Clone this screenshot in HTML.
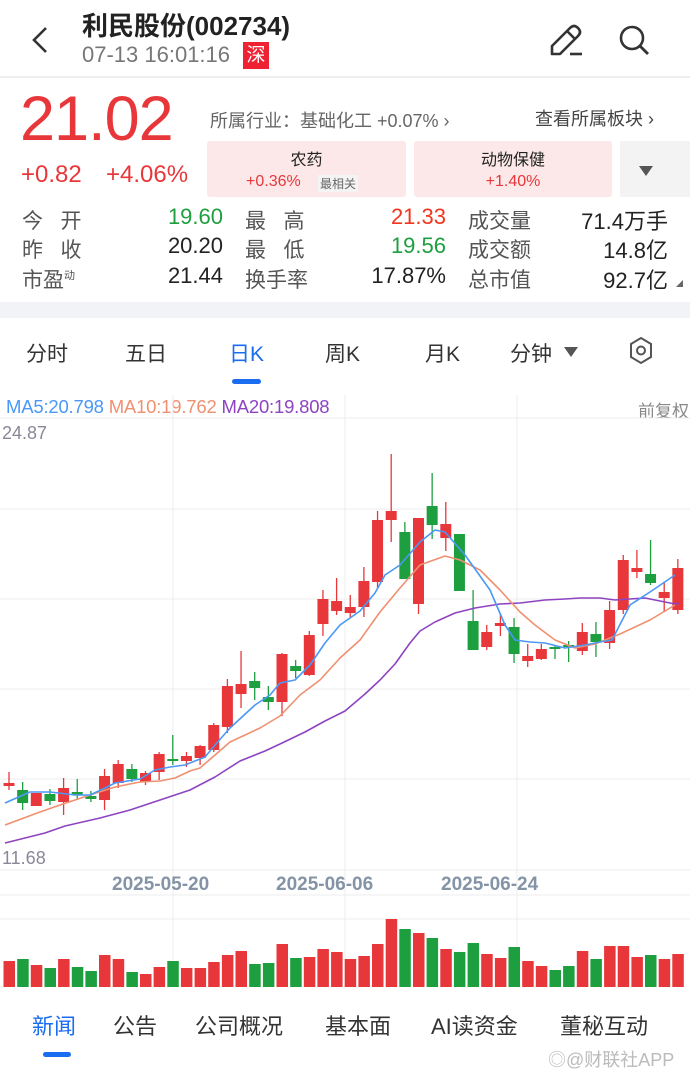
<!DOCTYPE html>
<html><head><meta charset="utf-8"><style>
*{margin:0;padding:0;box-sizing:border-box}
body{width:690px;height:1075px;background:#fff;font-family:"Liberation Sans","Noto Sans CJK SC",sans-serif;position:relative;overflow:hidden;color:#222}
.a{position:absolute;white-space:nowrap}
.r{color:#e8373a}.g{color:#1e9f3f}
.lbl{color:#555;font-size:21px;letter-spacing:0}
.val{font-size:22px;text-align:right;width:100px}
</style></head><body>
<!-- header -->
<svg class="a" style="left:28px;top:24px" width="24" height="32"><path d="M18 4 L6 16 L18 28" stroke="#333" stroke-width="2.6" fill="none"/></svg>
<div class="a" style="left:82px;top:6px;font-size:26px;font-weight:bold;color:#222">利民股份(002734)</div>
<div class="a" style="left:82px;top:42px;font-size:22px;color:#777">07-13 16:01:16</div>
<div class="a" style="left:243px;top:42px;width:26px;height:27px;background:#ee2233;color:#fff;font-size:19px;line-height:27px;text-align:center">深</div>
<svg class="a" style="left:548px;top:22px" width="38" height="36"><path d="M4 32 L4 24 L22 6 Q26 2 30 6 Q34 10 30 14 L12 32 Z M19 9 L27 17" stroke="#333" stroke-width="2.6" fill="none" stroke-linejoin="round"/><path d="M22 32 L34 32" stroke="#333" stroke-width="2.6"/></svg>
<svg class="a" style="left:618px;top:24px" width="34" height="34"><circle cx="14" cy="14" r="11" stroke="#333" stroke-width="2.6" fill="none"/><path d="M22 22 L30 30" stroke="#333" stroke-width="2.8"/></svg>
<div class="a" style="left:0;top:76px;width:690px;height:2px;background:#eee"></div>
<!-- price -->
<div class="a r" style="left:20px;top:83px;font-size:63px;letter-spacing:-1px">21.02</div>
<div class="a r" style="left:21px;top:161px;font-size:24px">+0.82</div>
<div class="a r" style="left:106px;top:161px;font-size:24px">+4.06%</div>
<div class="a" style="left:210px;top:107px;font-size:18px;color:#666">所属行业：基础化工 +0.07% ›</div>
<div class="a" style="left:535px;top:105px;font-size:18px;color:#444">查看所属板块 ›</div>
<div class="a" style="left:207px;top:141px;width:199px;height:56px;background:#fce8e8;border-radius:3px"></div>
<div class="a" style="left:207px;top:146px;width:199px;text-align:center;font-size:16px;color:#222">农药</div>
<div class="a r" style="left:246px;top:173px;font-size:16px">+0.36%</div>
<div class="a" style="left:318px;top:175px;font-size:12px;color:#666;background:#f4f4f4;padding:0 2px">最相关</div>
<div class="a" style="left:414px;top:141px;width:198px;height:56px;background:#fce8e8;border-radius:3px"></div>
<div class="a" style="left:414px;top:146px;width:198px;text-align:center;font-size:16px;color:#222">动物保健</div>
<div class="a r" style="left:414px;top:173px;width:198px;text-align:center;font-size:16px">+1.40%</div>
<div class="a" style="left:620px;top:141px;width:70px;height:56px;background:#f3f3f3"></div>
<svg class="a" style="left:638px;top:165px" width="16" height="12"><path d="M1 1 L15 1 L8 11 Z" fill="#555"/></svg>
<!-- stats -->
<div class="a lbl" style="left:22px;top:205px">今&nbsp;&nbsp;&nbsp;开</div>
<div class="a lbl" style="left:22px;top:234px">昨&nbsp;&nbsp;&nbsp;收</div>
<div class="a lbl" style="left:22px;top:264px">市盈<sup style="font-size:11px">动</sup></div>
<div class="a val g" style="left:123px;top:204px">19.60</div>
<div class="a val" style="left:123px;top:233px">20.20</div>
<div class="a val" style="left:123px;top:263px">21.44</div>
<div class="a lbl" style="left:245px;top:205px">最&nbsp;&nbsp;&nbsp;高</div>
<div class="a lbl" style="left:245px;top:234px">最&nbsp;&nbsp;&nbsp;低</div>
<div class="a lbl" style="left:245px;top:264px">换手率</div>
<div class="a val" style="left:346px;top:204px;color:#f0361f">21.33</div>
<div class="a val g" style="left:346px;top:233px">19.56</div>
<div class="a val" style="left:346px;top:263px">17.87%</div>
<div class="a lbl" style="left:468px;top:205px">成交量</div>
<div class="a lbl" style="left:468px;top:234px">成交额</div>
<div class="a lbl" style="left:468px;top:264px">总市值</div>
<div class="a val" style="left:568px;top:204px">71.4万手</div>
<div class="a val" style="left:568px;top:233px">14.8亿</div>
<div class="a val" style="left:568px;top:263px">92.7亿</div>
<svg class="a" style="left:676px;top:280px" width="8" height="8"><path d="M7 0 L7 7 L0 7 Z" fill="#666"/></svg>
<div class="a" style="left:0;top:302px;width:690px;height:16px;background:#f2f3f6"></div>
<!-- tabs -->
<div class="a" style="left:26px;top:338px;font-size:21px;color:#333">分时</div>
<div class="a" style="left:125px;top:338px;font-size:21px;color:#333">五日</div>
<div class="a" style="left:229px;top:338px;font-size:21px;color:#1a6cf0">日K</div>
<div class="a" style="left:325px;top:338px;font-size:21px;color:#333">周K</div>
<div class="a" style="left:425px;top:338px;font-size:21px;color:#333">月K</div>
<div class="a" style="left:510px;top:338px;font-size:21px;color:#333">分钟</div>
<svg class="a" style="left:563px;top:346px" width="16" height="12"><path d="M1 1 L15 1 L8 11 Z" fill="#555"/></svg>
<svg class="a" style="left:628px;top:336px" width="26" height="30"><path d="M13 2 L23 8 L23 21 L13 27 L3 21 L3 8 Z" stroke="#555" stroke-width="2" fill="none"/><circle cx="13" cy="14.5" r="4" stroke="#555" stroke-width="2" fill="none"/></svg>
<div class="a" style="left:232px;top:379px;width:29px;height:5px;border-radius:3px;background:#1a6cf0"></div>
<div class="a" style="left:6px;top:396px;font-size:18.5px;letter-spacing:-0.2px"><span style="color:#4b98f5">MA5:20.798</span> <span style="color:#ef9070">MA10:19.762</span> <span style="color:#8e44c0">MA20:19.808</span></div>
<div class="a" style="left:638px;top:397px;font-size:17px;color:#888">前复权</div>
<svg class="a" style="left:0;top:0" width="690" height="1000">
<g stroke="#ececec" stroke-width="1">
<line x1="0" y1="418" x2="690" y2="418"/><line x1="0" y1="509" x2="690" y2="509"/><line x1="0" y1="599" x2="690" y2="599"/><line x1="0" y1="689" x2="690" y2="689"/><line x1="0" y1="779" x2="690" y2="779"/><line x1="0" y1="870" x2="690" y2="870"/><line x1="0" y1="895" x2="690" y2="895"/><line x1="0" y1="919" x2="690" y2="919"/>
<line x1="173" y1="395" x2="173" y2="987"/><line x1="345" y1="395" x2="345" y2="987"/><line x1="517" y1="395" x2="517" y2="987"/>
</g>
<text x="2" y="439" font-size="18" fill="#889" font-family="Liberation Sans">24.87</text>
<text x="2" y="864" font-size="18" fill="#889" font-family="Liberation Sans">11.68</text>
<g font-size="19" fill="#8494a6" font-weight="bold" font-family="Liberation Sans"><text x="112" y="890">2025-05-20</text><text x="276" y="890">2025-06-06</text><text x="441" y="890">2025-06-24</text></g>
<g id="c" stroke-linecap="butt">
<g stroke="#e8373a">
<line x1="9" y1="772" x2="9" y2="790" stroke-width="1.3"/><line x1="9" y1="783" x2="9" y2="786" stroke-width="11"/>
<line x1="36.3" y1="793" x2="36.3" y2="806" stroke-width="11"/>
<line x1="63.6" y1="778" x2="63.6" y2="815" stroke-width="1.3"/><line x1="63.6" y1="788" x2="63.6" y2="802" stroke-width="11"/>
<line x1="104.55" y1="769" x2="104.55" y2="810" stroke-width="1.3"/><line x1="104.55" y1="776" x2="104.55" y2="800" stroke-width="11"/>
<line x1="118.2" y1="760" x2="118.2" y2="788" stroke-width="1.3"/><line x1="118.2" y1="764" x2="118.2" y2="783" stroke-width="11"/>
<line x1="145.5" y1="771" x2="145.5" y2="785" stroke-width="1.3"/><line x1="145.5" y1="773" x2="145.5" y2="782" stroke-width="11"/>
<line x1="159.15" y1="752" x2="159.15" y2="780" stroke-width="1.3"/><line x1="159.15" y1="754" x2="159.15" y2="772" stroke-width="11"/>
<line x1="186.45" y1="752" x2="186.45" y2="767" stroke-width="1.3"/><line x1="186.45" y1="756" x2="186.45" y2="761" stroke-width="11"/>
<line x1="200.1" y1="745" x2="200.1" y2="765" stroke-width="1.3"/><line x1="200.1" y1="746" x2="200.1" y2="758" stroke-width="11"/>
<line x1="213.75" y1="723" x2="213.75" y2="752" stroke-width="1.3"/><line x1="213.75" y1="725" x2="213.75" y2="750" stroke-width="11"/>
<line x1="227.4" y1="679" x2="227.4" y2="733" stroke-width="1.3"/><line x1="227.4" y1="686" x2="227.4" y2="727" stroke-width="11"/>
<line x1="241.05" y1="651" x2="241.05" y2="708" stroke-width="1.3"/><line x1="241.05" y1="684" x2="241.05" y2="694" stroke-width="11"/>
<line x1="282" y1="653" x2="282" y2="716" stroke-width="1.3"/><line x1="282" y1="654" x2="282" y2="702" stroke-width="11"/>
<line x1="309.3" y1="631" x2="309.3" y2="676" stroke-width="1.3"/><line x1="309.3" y1="635" x2="309.3" y2="675" stroke-width="11"/>
<line x1="322.95" y1="590" x2="322.95" y2="636" stroke-width="1.3"/><line x1="322.95" y1="599" x2="322.95" y2="624" stroke-width="11"/>
<line x1="336.6" y1="578" x2="336.6" y2="615" stroke-width="1.3"/><line x1="336.6" y1="601" x2="336.6" y2="611" stroke-width="11"/>
<line x1="350.25" y1="595" x2="350.25" y2="618" stroke-width="1.3"/><line x1="350.25" y1="607" x2="350.25" y2="613" stroke-width="11"/>
<line x1="363.9" y1="567" x2="363.9" y2="617" stroke-width="1.3"/><line x1="363.9" y1="581" x2="363.9" y2="607" stroke-width="11"/>
<line x1="377.55" y1="511" x2="377.55" y2="589" stroke-width="1.3"/><line x1="377.55" y1="520" x2="377.55" y2="582" stroke-width="11"/>
<line x1="391.2" y1="454" x2="391.2" y2="542" stroke-width="1.3"/><line x1="391.2" y1="511" x2="391.2" y2="520" stroke-width="11"/>
<line x1="418.5" y1="518" x2="418.5" y2="614" stroke-width="1.3"/><line x1="418.5" y1="518" x2="418.5" y2="604" stroke-width="11"/>
<line x1="445.8" y1="502" x2="445.8" y2="551" stroke-width="1.3"/><line x1="445.8" y1="524" x2="445.8" y2="538" stroke-width="11"/>
<line x1="486.75" y1="625" x2="486.75" y2="650" stroke-width="1.3"/><line x1="486.75" y1="632" x2="486.75" y2="647" stroke-width="11"/>
<line x1="500.4" y1="613" x2="500.4" y2="636" stroke-width="1.3"/><line x1="500.4" y1="623" x2="500.4" y2="626" stroke-width="11"/>
<line x1="527.7" y1="644" x2="527.7" y2="667" stroke-width="1.3"/><line x1="527.7" y1="656" x2="527.7" y2="661" stroke-width="11"/>
<line x1="541.35" y1="644" x2="541.35" y2="660" stroke-width="1.3"/><line x1="541.35" y1="649" x2="541.35" y2="659" stroke-width="11"/>
<line x1="582.3" y1="623" x2="582.3" y2="655" stroke-width="1.3"/><line x1="582.3" y1="632" x2="582.3" y2="651" stroke-width="11"/>
<line x1="609.6" y1="601" x2="609.6" y2="649" stroke-width="1.3"/><line x1="609.6" y1="610" x2="609.6" y2="643" stroke-width="11"/>
<line x1="623.25" y1="555" x2="623.25" y2="614" stroke-width="1.3"/><line x1="623.25" y1="560" x2="623.25" y2="610" stroke-width="11"/>
<line x1="636.9" y1="550" x2="636.9" y2="578" stroke-width="1.3"/><line x1="636.9" y1="568" x2="636.9" y2="572" stroke-width="11"/>
<line x1="664.2" y1="583" x2="664.2" y2="612" stroke-width="1.3"/><line x1="664.2" y1="592" x2="664.2" y2="598" stroke-width="11"/>
<line x1="677.85" y1="559" x2="677.85" y2="614" stroke-width="1.3"/><line x1="677.85" y1="568" x2="677.85" y2="610" stroke-width="11"/>
</g>
<g stroke="#1e9f3f">
<line x1="22.65" y1="782" x2="22.65" y2="810" stroke-width="1.3"/><line x1="22.65" y1="790" x2="22.65" y2="803" stroke-width="11"/>
<line x1="49.95" y1="789" x2="49.95" y2="805" stroke-width="1.3"/><line x1="49.95" y1="794" x2="49.95" y2="801" stroke-width="11"/>
<line x1="77.25" y1="779" x2="77.25" y2="800" stroke-width="1.3"/><line x1="77.25" y1="792" x2="77.25" y2="795" stroke-width="11"/>
<line x1="90.9" y1="791" x2="90.9" y2="802" stroke-width="1.3"/><line x1="90.9" y1="796" x2="90.9" y2="799" stroke-width="11"/>
<line x1="131.85" y1="764" x2="131.85" y2="782" stroke-width="1.3"/><line x1="131.85" y1="769" x2="131.85" y2="779" stroke-width="11"/>
<line x1="172.8" y1="735" x2="172.8" y2="765" stroke-width="1.3"/><line x1="172.8" y1="759" x2="172.8" y2="761" stroke-width="11"/>
<line x1="254.7" y1="672" x2="254.7" y2="700" stroke-width="1.3"/><line x1="254.7" y1="681" x2="254.7" y2="688" stroke-width="11"/>
<line x1="268.35" y1="686" x2="268.35" y2="710" stroke-width="1.3"/><line x1="268.35" y1="697" x2="268.35" y2="702" stroke-width="11"/>
<line x1="295.65" y1="660" x2="295.65" y2="678" stroke-width="1.3"/><line x1="295.65" y1="666" x2="295.65" y2="671" stroke-width="11"/>
<line x1="404.85" y1="522" x2="404.85" y2="579" stroke-width="1.3"/><line x1="404.85" y1="532" x2="404.85" y2="579" stroke-width="11"/>
<line x1="432.15" y1="473" x2="432.15" y2="539" stroke-width="1.3"/><line x1="432.15" y1="506" x2="432.15" y2="525" stroke-width="11"/>
<line x1="459.45" y1="534" x2="459.45" y2="591" stroke-width="11"/>
<line x1="473.1" y1="590" x2="473.1" y2="650" stroke-width="1.3"/><line x1="473.1" y1="621" x2="473.1" y2="650" stroke-width="11"/>
<line x1="514.05" y1="618" x2="514.05" y2="663" stroke-width="1.3"/><line x1="514.05" y1="627" x2="514.05" y2="654" stroke-width="11"/>
<line x1="555" y1="646" x2="555" y2="659" stroke-width="1.3"/><line x1="555" y1="647" x2="555" y2="649" stroke-width="11"/>
<line x1="568.65" y1="641" x2="568.65" y2="662" stroke-width="1.3"/><line x1="568.65" y1="645" x2="568.65" y2="647" stroke-width="11"/>
<line x1="595.95" y1="622" x2="595.95" y2="657" stroke-width="1.3"/><line x1="595.95" y1="634" x2="595.95" y2="642" stroke-width="11"/>
<line x1="650.55" y1="540" x2="650.55" y2="585" stroke-width="1.3"/><line x1="650.55" y1="574" x2="650.55" y2="583" stroke-width="11"/>
</g>
</g>
<g fill="none" stroke-width="1.6" stroke-linejoin="round">
<polyline stroke="#8e44c0" points="5,843 45,833 65,826 100,818 130,810 160,800 190,790 215,777 240,761 265,751 280,744 305,732 325,721 345,711 365,694 380,680 395,664 410,643 420,631 435,622 455,613 475,608 500,604 520,603 545,600 565,599 580,598 600,598 615,600 630,599 645,598 660,601 675,604 680,603"/>
<polyline stroke="#ef9070" points="5,825 40,812 60,805 90,795 115,787 140,782 160,781 175,778 190,771 200,768 215,755 230,742 260,728 280,716 300,695 320,680 340,658 360,640 380,612 400,588 420,565 445,556 460,560 480,570 500,590 520,612 535,625 555,640 575,648 595,644 620,634 650,620 675,605"/>
<polyline stroke="#4b98f5" points="5,803 30,792 50,792 75,795 90,795 105,788 115,783 140,779 155,770 170,767 185,765 205,757 215,745 230,728 255,705 270,695 280,683 295,680 310,665 325,643 340,625 360,611 375,593 385,575 400,565 420,542 435,530 445,532 465,555 490,590 505,625 515,640 530,642 545,643 565,648 585,645 600,642 612,640 630,605 650,592 675,575"/>
</g>
<g fill="#e8373a">
<rect x="3.5" y="961" width="11.5" height="26"/><rect x="30.8" y="965" width="11.5" height="22"/><rect x="58.1" y="959" width="11.5" height="28"/><rect x="99" y="955" width="11.5" height="32"/><rect x="112.7" y="959" width="11.5" height="28"/><rect x="140" y="974" width="11.5" height="13"/><rect x="153.6" y="967" width="11.5" height="20"/><rect x="180.9" y="968" width="11.5" height="19"/><rect x="194.6" y="968" width="11.5" height="19"/><rect x="208.2" y="962" width="11.5" height="25"/><rect x="221.9" y="955" width="11.5" height="32"/><rect x="235.5" y="951" width="11.5" height="36"/><rect x="276.5" y="944" width="11.5" height="43"/><rect x="303.8" y="957" width="11.5" height="30"/><rect x="317.4" y="949" width="11.5" height="38"/><rect x="331.1" y="952" width="11.5" height="35"/><rect x="344.7" y="959" width="11.5" height="28"/><rect x="358.4" y="956" width="11.5" height="31"/><rect x="372" y="944" width="11.5" height="43"/><rect x="385.7" y="919" width="11.5" height="68"/><rect x="413" y="933" width="11.5" height="54"/><rect x="440.3" y="949" width="11.5" height="38"/><rect x="481.2" y="954" width="11.5" height="33"/><rect x="494.9" y="958" width="11.5" height="29"/><rect x="522.2" y="961" width="11.5" height="26"/><rect x="535.8" y="966" width="11.5" height="21"/><rect x="576.8" y="951" width="11.5" height="36"/><rect x="604.1" y="946" width="11.5" height="41"/><rect x="617.7" y="946" width="11.5" height="41"/><rect x="631.4" y="957" width="11.5" height="30"/><rect x="658.7" y="959" width="11.5" height="28"/><rect x="672.3" y="954" width="11.5" height="33"/>
</g>
<g fill="#1e9f3f">
<rect x="17.2" y="959" width="11.5" height="28"/><rect x="44.5" y="968" width="11.5" height="19"/><rect x="71.8" y="967" width="11.5" height="20"/><rect x="85.4" y="971" width="11.5" height="16"/><rect x="126.4" y="972" width="11.5" height="15"/><rect x="167.3" y="961" width="11.5" height="26"/><rect x="249.2" y="964" width="11.5" height="23"/><rect x="262.9" y="963" width="11.5" height="24"/><rect x="290.2" y="958" width="11.5" height="29"/><rect x="399.3" y="929" width="11.5" height="58"/><rect x="426.6" y="938" width="11.5" height="49"/><rect x="453.9" y="952" width="11.5" height="35"/><rect x="467.6" y="943" width="11.5" height="44"/><rect x="508.5" y="947" width="11.5" height="40"/><rect x="549.5" y="970" width="11.5" height="17"/><rect x="563.1" y="966" width="11.5" height="21"/><rect x="590.4" y="959" width="11.5" height="28"/><rect x="645" y="955" width="11.5" height="32"/>
</g>
</svg>
<!-- bottom tabs -->
<div class="a" style="left:32px;top:1009px;font-size:22px;color:#1a6cf0">新闻</div>
<div class="a" style="left:113px;top:1009px;font-size:22px;color:#333">公告</div>
<div class="a" style="left:195px;top:1009px;font-size:22px;color:#333">公司概况</div>
<div class="a" style="left:325px;top:1009px;font-size:22px;color:#333">基本面</div>
<div class="a" style="left:431px;top:1009px;font-size:22px;color:#333">AI读资金</div>
<div class="a" style="left:560px;top:1009px;font-size:22px;color:#333">董秘互动</div>
<div class="a" style="left:43px;top:1052px;width:28px;height:5px;border-radius:3px;background:#1a6cf0"></div>
<div class="a" style="left:548px;top:1046px;font-size:18px;color:#bbb">◎@财联社APP</div>
</body></html>
